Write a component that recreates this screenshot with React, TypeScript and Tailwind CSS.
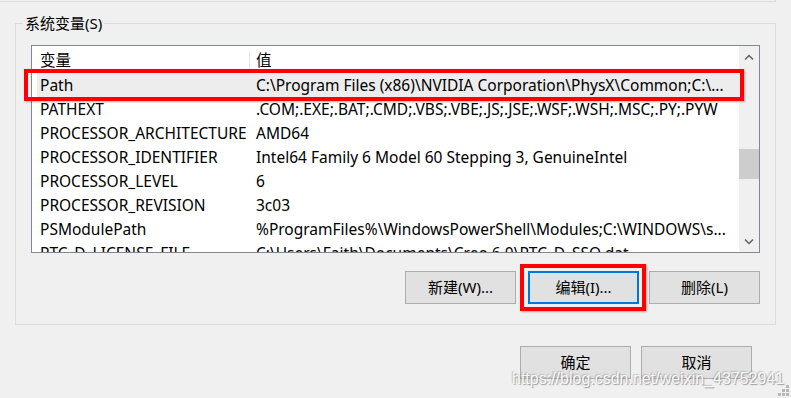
import React from "react";

const rows: [string, string][] = [
  ["Path", "C:\\Program Files (x86)\\NVIDIA Corporation\\PhysX\\Common;C:\\..."],
  ["PATHEXT", ".COM;.EXE;.BAT;.CMD;.VBS;.VBE;.JS;.JSE;.WSF;.WSH;.MSC;.PY;.PYW"],
  ["PROCESSOR_ARCHITECTURE", "AMD64"],
  ["PROCESSOR_IDENTIFIER", "Intel64 Family 6 Model 60 Stepping 3, GenuineIntel"],
  ["PROCESSOR_LEVEL", "6"],
  ["PROCESSOR_REVISION", "3c03"],
  ["PSModulePath", "%ProgramFiles%\\WindowsPowerShell\\Modules;C:\\WINDOWS\\s..."],
  ["PTC_D_LICENSE_FILE", "C:\\Users\\Faith\\Documents\\Creo 6.0\\PTC_D_SSO.dat"],
];

function Chevron({ up }: { up?: boolean }) {
  return (
    <svg width="10" height="6" viewBox="0 0 10 6">
      <polyline
        points={up ? "1,5.5 5,1.5 9,5.5" : "1,0.5 5,4.5 9,0.5"}
        fill="none"
        stroke="#606060"
        strokeWidth="1.5"
      />
    </svg>
  );
}

function Btn({ children, focused }: { children: React.ReactNode; focused?: boolean }) {
  return (
    <div
      className={
        "w-[111px] h-[33px] bg-[#e1e1e1] flex items-center justify-center text-[15px] text-black " +
        (focused ? "border-2 border-[#0078d7]" : "border border-[#adadad]")
      }
    >
      {children}
    </div>
  );
}

export default function App() {
  return (
    <div className="relative w-[791px] h-[398px] overflow-hidden bg-[#f0f0f0] font-['Noto_Sans','Noto_Sans_CJK_SC',sans-serif] text-black">
      <div className="w-[776px] h-[2px] border-b border-r border-[#dcdcdc]" />

      <div className="relative ml-[15px] mt-[21px] w-[761px] h-[302px] border border-[#dcdcdc]">
        <span className="absolute left-[7px] top-[-12px] px-[2px] bg-[#f0f0f0] text-[15px] leading-[22px]">
          系统变量(S)
        </span>

        <div className="ml-[15px] mt-[21px] w-[729px] h-[208px] border border-[#828790] bg-white flex overflow-hidden">
          <div className="flex-1 min-w-0 flex flex-col text-[15.5px]">
            <div className="h-[27px] shrink-0 flex items-center pt-[3px]">
              <div className="w-[218px] pl-[8px] border-r border-[#e5e5e5] h-[20px] flex items-center">变量</div>
              <div className="pl-[6px]">值</div>
            </div>
            {rows.map(([k, v], i) => (
              <div
                key={k}
                className={
                  "h-[24px] shrink-0 flex items-center pt-[2px] ml-[5px] whitespace-nowrap " +
                  (i === 0 ? "bg-[#ededed]" : "")
                }
              >
                <div className="w-[213px] pl-[3px] shrink-0">{k}</div>
                <div className="pl-[6px] overflow-hidden">{v}</div>
              </div>
            ))}
          </div>
          <div className="w-[20px] shrink-0 bg-[#f0f0f0] flex flex-col">
            <div className="h-[21px] flex items-center justify-center">
              <Chevron up />
            </div>
            <div className="flex-1 pt-[82px]">
              <div className="h-[30px] bg-[#cdcdcd]" />
            </div>
            <div className="h-[21px] flex items-center justify-center">
              <Chevron />
            </div>
          </div>
        </div>

        <div className="absolute left-[8px] top-[45px] w-[720px] h-[32px] border-4 border-[#ff0000] shadow-[1px_1px_2px_rgba(0,0,0,0.3)]" />

        <div className="mt-[18px] ml-[389px] flex">
          <Btn>新建(W)...</Btn>
          <div className="relative ml-[12px]">
            <Btn focused>编辑(I)...</Btn>
            <div className="absolute -left-[8px] -top-[7px] -right-[7px] -bottom-[7px] border-4 border-[#ff0000] shadow-[1px_1px_2px_rgba(0,0,0,0.3)]" />
          </div>
          <div className="ml-[10px]">
            <Btn>删除(L)</Btn>
          </div>
        </div>
      </div>

      <div className="mt-[21px] ml-[520px] flex gap-[10px]">
        <Btn>确定</Btn>
        <Btn>取消</Btn>
      </div>

      <div className="absolute left-[512px] top-[368px] text-[16px] leading-[22px] font-['Liberation_Sans',sans-serif] text-[#f8f8f8] [text-shadow:1px_1px_1px_rgba(120,120,120,0.7),-1px_-1px_1px_rgba(150,150,150,0.5)] whitespace-nowrap">
        https://blog.csdn.net/weixin_43752941
      </div>

      <svg className="absolute right-[1px] bottom-[1px]" width="12" height="12" viewBox="0 0 12 12">
        <rect x="8" y="0" width="3" height="3" fill="#b8b8b8" />
        <rect x="4" y="4" width="3" height="3" fill="#b8b8b8" />
        <rect x="8" y="4" width="3" height="3" fill="#b8b8b8" />
        <rect x="0" y="8" width="3" height="3" fill="#b8b8b8" />
        <rect x="4" y="8" width="3" height="3" fill="#b8b8b8" />
        <rect x="8" y="8" width="3" height="3" fill="#b8b8b8" />
      </svg>
    </div>
  );
}
